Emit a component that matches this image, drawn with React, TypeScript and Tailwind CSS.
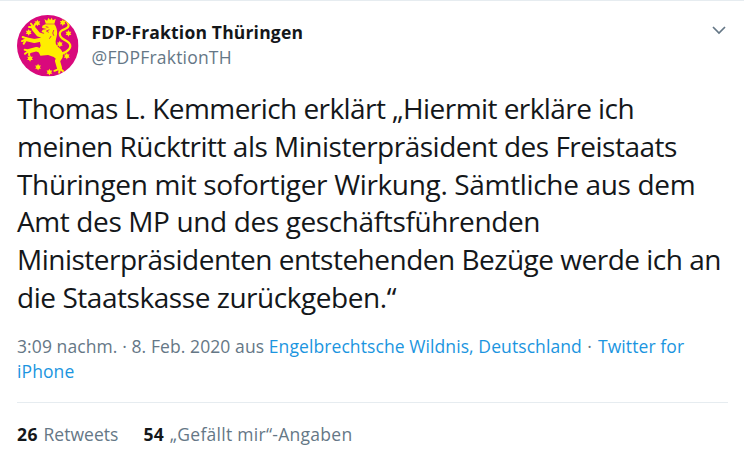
import React from 'react';

const STARS: [number, number][] = [
  [83, 44],
  [159, 43],
  [57, 72],
  [176, 75],
  [150, 107],
  [171, 143],
  [61, 150],
  [85, 176],
  [119, 191],
];

function starPoints(cx: number, cy: number) {
  return Array.from({ length: 12 }, (_, i) => {
    const r = i % 2 === 0 ? 10 : 5.5;
    const a = (i * Math.PI) / 6 - Math.PI / 2;
    return `${(cx + r * Math.cos(a)).toFixed(1)},${(cy + r * Math.sin(a)).toFixed(1)}`;
  }).join(' ');
}

function Avatar() {
  return (
    <svg viewBox="22 20 184 184" className="size-[61.5px] shrink-0" aria-label="FDP-Fraktion Thüringen">
      <defs>
        <clipPath id="round">
          <circle cx="114" cy="112" r="92" />
        </clipPath>
      </defs>
      <g clipPath="url(#round)">
        <rect x="22" y="20" width="184" height="184" fill="#d9097c" />
        <g fill="#ffee00">
          {STARS.map(([x, y]) => (
            <polygon key={`${x}-${y}`} points={starPoints(x, y)} />
          ))}
          <path d="M104 32l8 5 4-9 5 7 5-7 3 8 9-5-4 15h-26z" />
          <path d="M107 48h27c6 8 9 18 8 28-1 12-6 20-4 29 3 10 18 16 21 29 2 10-5 20-15 22l-12-10-17-6-23 2-7-14 8-16-3-14 5-16 9-8-9-3 4-7 12-2-14-3 1-7z" />
        </g>
        <g fill="none" stroke="#ffee00" strokeLinecap="round" strokeLinejoin="round">
          <path strokeWidth="13" d="M104 84L86 78L72 61" />
          <path strokeWidth="12" d="M98 93L74 98L52 93" />
          <path strokeWidth="13" d="M96 128L80 122L58 128" />
          <path strokeWidth="15" d="M151 145L143 157L149 178" />
          <path strokeWidth="6" d="M69 57L58 56M70 55L64 46M73 56L76 47M50 92L37 98M49 95L42 106M51 90L39 86M56 126L45 124M55 129L46 136M59 131L58 140M147 182L134 187M150 184L148 193M153 182L160 188" />
          <path strokeWidth="6.5" d="M153 137C175 130 188 116 178 104C168 93 149 92 150 76C151 60 173 65 176 53C178 46 173 41 165 33" />
        </g>
        <path d="M108 55l8 2M119 64l-9 4 7 4M132 65l-3 9 3 8M124 83l-5 8" fill="none" stroke="#d9097c" strokeWidth="2.5" />
      </g>
    </svg>
  );
}

const LINES: [string, string][] = [
  ['Thomas L. Kemmerich erklärt „Hiermit erkläre ich', 'tracking-[-0.56px]'],
  ['meinen Rücktritt als Ministerpräsident des Freistaats', 'tracking-[-0.5px]'],
  ['Thüringen mit sofortiger Wirkung. Sämtliche aus dem', 'tracking-[-0.34px]'],
  ['Amt des MP und des geschäftsführenden', 'tracking-[-0.38px]'],
  ['Ministerpräsidenten entstehenden Bezüge werde ich an', 'tracking-[-0.5px]'],
  ['die Staatskasse zurückgeben.“', 'tracking-[-0.45px]'],
];

export default function App() {
  return (
    <main className="h-[465px] w-[744px] overflow-hidden border-t border-[#e6ecf0] bg-white pr-4 pl-[17px] font-['Open_Sans','Noto_Sans',sans-serif] text-[#14171a]">
      <header className="flex pt-[14px]">
        <Avatar />
        <div className="ml-[13px] flex flex-1 flex-col pt-[5px] leading-[25px] whitespace-nowrap">
          <strong className="text-[17.5px] font-bold tracking-[0.18px]">FDP-Fraktion Thüringen</strong>
          <span className="text-[17.5px] tracking-[0.2px] text-[#657786]">@FDPFraktionTH</span>
        </div>
        <svg viewBox="0 0 14 9" className="mt-[11px] mr-[2.5px] h-[9px] w-[14px]" fill="none" stroke="#657786" strokeWidth="1.7">
          <path d="M1 1l6 6 6-6" />
        </svg>
      </header>
      <p className="mt-[13.5px] text-[28px] leading-[37.8px] whitespace-nowrap">
        {LINES.map(([text, tracking]) => (
          <span key={text} className={`block ${tracking}`}>{text}</span>
        ))}
      </p>
      <p className="mt-[17px] text-[17.5px] leading-[25px] tracking-[0.09px] whitespace-nowrap text-[#657786]">
        <span>3:09 nachm. · 8. Feb. 2020 aus </span>
        <a className="text-[#1b95e0]">Engelbrechtsche Wildnis, Deutschland</a>
        <span className="tracking-[0.8px]"> · </span>
        <a className="text-[#1b95e0]">Twitter for<br />iPhone</a>
      </p>
      <footer className="mt-[18px] flex gap-6 border-t border-[#e6ecf0] pt-[19px] text-[17.5px] leading-[25px] whitespace-nowrap text-[#657786]">
        <span className="tracking-[0.05px]"><b className="mr-px tracking-[0.4px] text-[#14171a]">26</b> Retweets</span>
        <span className="ml-px tracking-[0.28px]"><b className="mr-px text-[#14171a]">54</b> „Gefällt mir“-Angaben</span>
      </footer>
    </main>
  );
}
